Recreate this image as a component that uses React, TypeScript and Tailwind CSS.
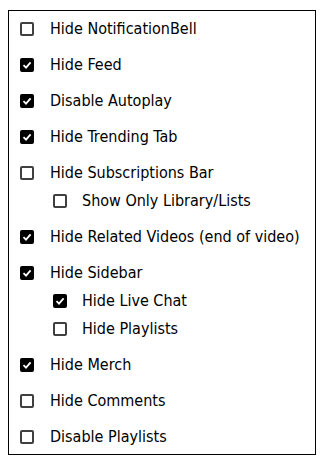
import React from "react";

type Option = {
  label: string;
  checked: boolean;
  sub?: boolean;
};

const options: Option[] = [
  { label: "Hide NotificationBell", checked: false },
  { label: "Hide Feed", checked: true },
  { label: "Disable Autoplay", checked: true },
  { label: "Hide Trending Tab", checked: true },
  { label: "Hide Subscriptions Bar", checked: false },
  { label: "Show Only Library/Lists", checked: false, sub: true },
  { label: "Hide Related Videos (end of video)", checked: true },
  { label: "Hide Sidebar", checked: true },
  { label: "Hide Live Chat", checked: true, sub: true },
  { label: "Hide Playlists", checked: false, sub: true },
  { label: "Hide Merch", checked: true },
  { label: "Hide Comments", checked: false },
  { label: "Disable Playlists", checked: false },
];

const Box: React.FC<{ checked: boolean }> = ({ checked }) =>
  checked ? (
    <span className="flex items-center justify-center w-[14px] h-[14px] rounded-[2px] bg-black shrink-0">
      <svg width="10" height="10" viewBox="0 0 10 10" fill="none">
        <path d="M1.5 5.2 L4 7.6 L8.6 2.4" stroke="white" strokeWidth="1.8" />
      </svg>
    </span>
  ) : (
    <span className="w-[14px] h-[14px] rounded-[2px] border-2 border-[#404040] bg-white shrink-0" />
  );

const App: React.FC = () => {
  return (
    <div className="bg-white min-h-[461px] pt-[10px] pl-2">
      <div
        className="w-[308px] border border-black pt-[4px] pb-[3px] pl-[11px] flex flex-col text-[16px] text-black"
        style={{ fontFamily: '"DejaVu Sans Condensed", "DejaVu Sans", sans-serif' }}
      >
        {options.map((opt, i) => (
          <label
            key={opt.label}
            className={`flex items-center h-[28px] ${
              opt.sub ? "pl-[33px] gap-[15px]" : i === 0 ? "gap-[16px]" : "mt-[8px] gap-[16px]"
            }`}
          >
            <Box checked={opt.checked} />
            <span>{opt.label}</span>
          </label>
        ))}
      </div>
    </div>
  );
};

export default App;
